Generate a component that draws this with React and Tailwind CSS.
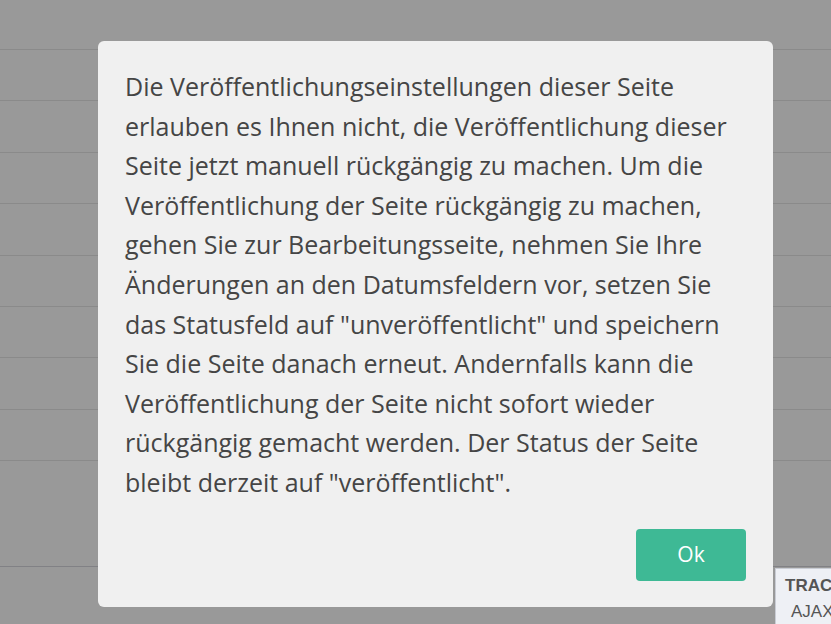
export default function App() {
    const rows = Array.from({ length: 8 })

    const lines = [
        'Die Veröffentlichungseinstellungen dieser Seite',
        'erlauben es Ihnen nicht, die Veröffentlichung dieser',
        'Seite jetzt manuell rückgängig zu machen. Um die',
        'Veröffentlichung der Seite rückgängig zu machen,',
        'gehen Sie zur Bearbeitungsseite, nehmen Sie Ihre',
        'Änderungen an den Datumsfeldern vor, setzen Sie',
        'das Statusfeld auf "unveröffentlicht" und speichern',
        'Sie die Seite danach erneut. Andernfalls kann die',
        'Veröffentlichung der Seite nicht sofort wieder',
        'rückgängig gemacht werden. Der Status der Seite',
        'bleibt derzeit auf "veröffentlicht".',
    ]

    return (
        <div className="relative h-[624px] w-[831px] overflow-hidden bg-white" style={{ fontFamily: '"Open Sans", "Noto Sans", sans-serif' }}>
            {/* Page behind the dialog */}
            <div className="h-[50px] border-b border-[#e6e6e6]" />
            {rows.map((_, i) => (
                <div key={i} className="h-[51.375px] border-b border-[#e6e6e6]" />
            ))}
            <div className="h-[105px]" />
            <div className="border-t border-[#d8d8de]" />

            {/* Overlay + dialog */}
            <div className="absolute inset-0 bg-black/40 pl-[98px] pt-[41px]">
                <div className="flex h-[566px] w-[675px] flex-col rounded-[6px] bg-[#f0f0f0] px-[27px] pt-[26px]">
                    <p className="whitespace-nowrap text-[25px] leading-[39.6px] text-[#454545]">
                        {lines.map((l, i) => (
                            <span key={i}>
                                {l}
                                <br />
                            </span>
                        ))}
                    </p>
                    <div className="mt-auto mb-[26px] flex justify-end">
                        <button className="h-[52px] w-[110px] rounded-[4px] bg-[#3eb995] text-[21px] text-white">
                            Ok
                        </button>
                    </div>
                </div>
            </div>

            {/* Debug panel peeking in the corner */}
            <div className="absolute left-[775px] top-[568px] h-[56px] w-[60px] border-l border-t border-[#c9ccd4] bg-[#eef0f5] pl-[9px] pt-[4px] font-['Liberation_Sans',sans-serif] text-[17px] leading-[26px] text-[#555]">
                <div className="font-bold">TRACE</div>
                <div className="pl-[6px]">AJAX</div>
            </div>
        </div>
    )
}
